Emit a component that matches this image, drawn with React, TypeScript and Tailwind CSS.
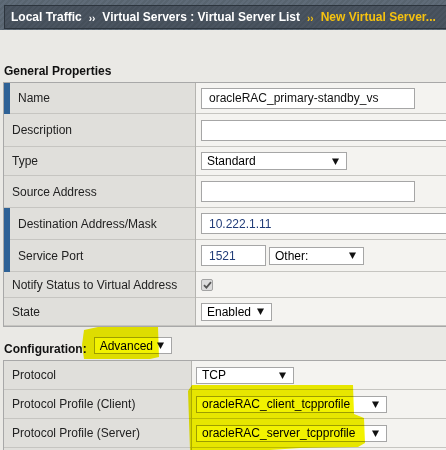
import React from "react";

type Row = {
  label: string;
  h: string;
  req?: boolean;
  value: React.ReactNode;
};

function Arrow() {
  return (
    <svg width="7" height="7" viewBox="0 0 7 7" className="shrink-0">
      <polygon points="0,0.5 7,0.5 3.5,7" fill="#111" />
    </svg>
  );
}

function Select({ text, w, h = "h-[18px]" }: { text: string; w: string; h?: string }) {
  return (
    <div
      className={`${w} ${h} shrink-0 flex items-center justify-between border border-[#a6a6a6] bg-white pl-[5px] pr-[7px] text-[12px] text-black`}
    >
      <span>{text}</span>
      <Arrow />
    </div>
  );
}

function Input({ text, w, color = "text-[#111]" }: { text?: string; w: string; color?: string }) {
  return (
    <div
      className={`${w} h-[21px] shrink-0 flex items-center border border-[#a6a6a6] bg-white pl-[7px] text-[12px] ${color}`}
    >
      {text}
    </div>
  );
}

function Check() {
  return (
    <div className="w-[12px] h-[12px] rounded-[2px] border border-[#a3a3a3] bg-[#dcdcdc] flex items-center justify-center">
      <svg width="9" height="8" viewBox="0 0 9 8">
        <path d="M1 4.2 L3.4 6.6 L8 1.2" stroke="#555" strokeWidth="1.8" fill="none" />
      </svg>
    </div>
  );
}

const general: Row[] = [
  { label: "Name", h: "h-[31px]", req: true, value: <Input w="w-[214px]" text="oracleRAC_primary-standby_vs" /> },
  { label: "Description", h: "h-[33px]", value: <Input w="w-[300px]" /> },
  { label: "Type", h: "h-[29px]", value: <Select w="w-[146px]" text="Standard" /> },
  { label: "Source Address", h: "h-[32px]", value: <Input w="w-[214px]" /> },
  {
    label: "Destination Address/Mask",
    h: "h-[32px]",
    req: true,
    value: <Input w="w-[300px]" text="10.222.1.11" color="text-[#213c78]" />,
  },
  {
    label: "Service Port",
    h: "h-[32px]",
    req: true,
    value: (
      <div className="flex items-center gap-[3px]">
        <Input w="w-[65px]" text="1521" color="text-[#213c78]" />
        <Select w="w-[95px]" text="Other:" />
      </div>
    ),
  },
  { label: "Notify Status to Virtual Address", h: "h-[26px]", value: <Check /> },
  { label: "State", h: "h-[28px]", value: <Select w="w-[71px]" text="Enabled" /> },
];

const config: Row[] = [
  { label: "Protocol", h: "h-[29px]", value: <Select w="w-[98px]" h="h-[17px]" text="TCP" /> },
  {
    label: "Protocol Profile (Client)",
    h: "h-[29px]",
    value: <Select w="w-[191px]" h="h-[17px]" text="oracleRAC_client_tcpprofile" />,
  },
  {
    label: "Protocol Profile (Server)",
    h: "h-[29px]",
    value: <Select w="w-[191px]" h="h-[17px]" text="oracleRAC_server_tcpprofile" />,
  },
  { label: "", h: "h-[29px]", value: null },
];

function Table({ rows, col, pad }: { rows: Row[]; col: string; pad: string }) {
  return (
    <div className="ml-[3px] w-[470px] border-l border-t border-[#a8a8a8]">
      {rows.map((r, i) => (
        <div key={i} className={`flex ${r.h}`}>
          <div className={`${col} shrink-0 flex bg-[#e0dfdb] border-r border-[#b5b4b0]`}>
            {r.req && <div className="w-[6px] bg-[#2f6296]" />}
            <div className="flex-1 flex items-center border-b border-[#c6c5c1] pl-[8px]">{r.label}</div>
          </div>
          <div
            className={`flex-1 min-w-0 overflow-hidden flex items-center bg-[#f4f3f0] border-b border-[#c6c5c1] ${pad}`}
          >
            {r.value}
          </div>
        </div>
      ))}
    </div>
  );
}

export default function App() {
  return (
    <div className="relative w-[446px] h-[450px] overflow-hidden bg-[#eae9e5] font-['Liberation_Sans',Arial,sans-serif] text-[12px] text-[#222]">
      {/* breadcrumb */}
      <div className="h-[30px] pt-[5px] pl-[4px] bg-[repeating-linear-gradient(135deg,#5f6b78_0px,#5f6b78_2px,#58646f_2px,#58646f_4px)]">
        <div className="h-[24px] w-[460px] flex items-center pl-[6px] border border-[#2c343d] bg-[repeating-linear-gradient(135deg,#4a5460_0px,#4a5460_2px,#454f5a_2px,#454f5a_4px)] font-bold text-white whitespace-nowrap">
          <span>Local Traffic</span>
          <span className="mx-[7px] text-[10px] pt-[2px]">››</span>
          <span>Virtual Servers : Virtual Server List</span>
          <span className="mx-[7px] text-[10px] pt-[2px] text-[#f6c20f]">››</span>
          <span className="text-[#f6c20f]">New Virtual Server...</span>
        </div>
      </div>

      <div className="mt-[34px] h-[18px] pl-[4px] font-bold leading-[15px] text-[#111]">General Properties</div>

      <Table rows={general} col="w-[192px]" pad="pl-[5px]" />
      <div className="ml-[3px] w-[470px] h-[1px] bg-[#a8a8a8]" />

      <div className="flex items-start h-[33px] pl-[4px]">
        <span className="mt-[15px] font-bold leading-[15px] text-[#111]">Configuration:</span>
        <div className="mt-[10px] ml-[7px]">
          <Select w="w-[78px]" h="h-[17px]" text="Advanced" />
        </div>
      </div>

      <Table rows={config} col="w-[188px]" pad="pl-[4px]" />

      {/* highlighter marks */}
      <svg className="absolute inset-0 pointer-events-none mix-blend-multiply" width="446" height="450">
        <polygon points="84,330 98,327 158,327 159,357 150,359 84,359 82,345" fill="#f2f200" />
        <polygon
          points="188,391 192,385 353,385 354,414 364,418 365,443 358,447 300,448 270,450 190,450"
          fill="#f2f200"
        />
      </svg>
    </div>
  );
}
